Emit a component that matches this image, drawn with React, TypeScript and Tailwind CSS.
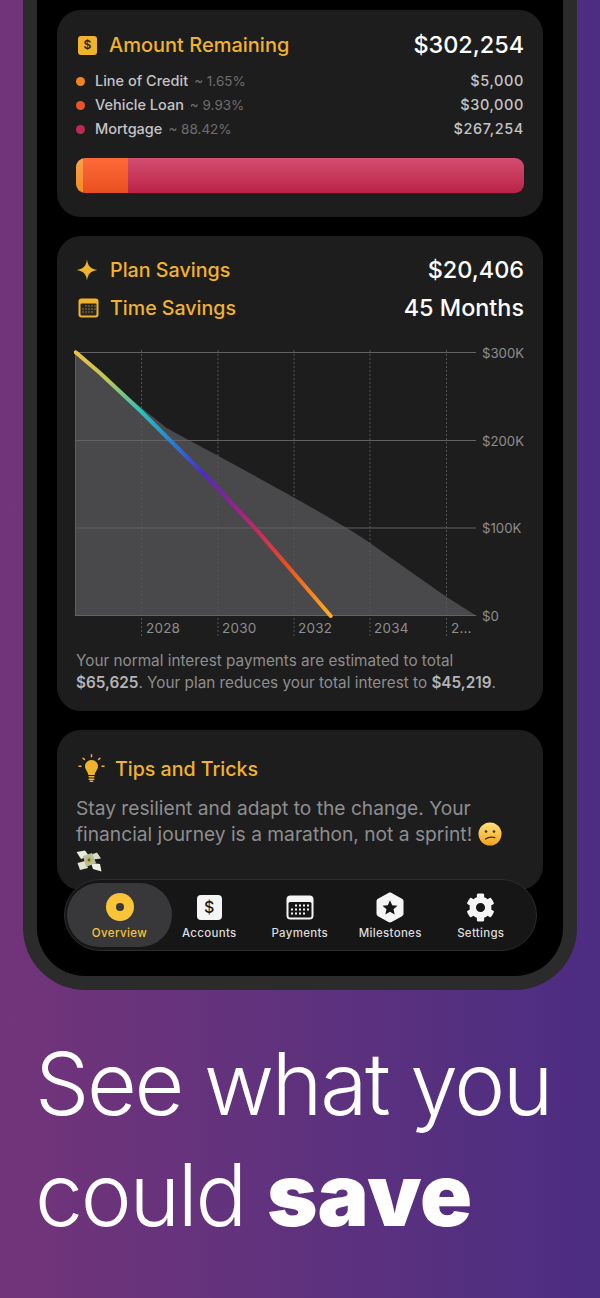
import React from 'react';
import { FaCog } from 'react-icons/fa';

const debts = [
  { name: 'Line of Credit', pct: '~ 1.65%', amount: '$5,000', dot: 'bg-[#f58220]' },
  { name: 'Vehicle Loan', pct: '~ 9.93%', amount: '$30,000', dot: 'bg-[#ea5428]' },
  { name: 'Mortgage', pct: '~ 88.42%', amount: '$267,254', dot: 'bg-[#bf2a55]' },
];

const years = [
  { x: 146, grid: 141.5, label: '2028' },
  { x: 222, grid: 218, label: '2030' },
  { x: 298, grid: 294, label: '2032' },
  { x: 374, grid: 370, label: '2034' },
  { x: 451, grid: 446.5, label: '2...' },
];

const ySteps = [
  { y: 352.5, label: '$300K' },
  { y: 440.5, label: '$200K' },
  { y: 528, label: '$100K' },
  { y: 615.5, label: '$0' },
];

const DollarTile = () => (
  <div className="flex h-[19px] w-[19px] items-center justify-center rounded-[3px] bg-[#f0b32c] text-[12px] font-semibold text-[#2a2110]">
    $
  </div>
);

const Sparkle = () => (
  <svg width="22" height="22" viewBox="0 0 22 22" className="shrink-0">
    <path d="M11 0.5C11.9 7 14.5 10 21.5 11C14.5 12 11.9 15 11 21.5C10.1 15 7.5 12 0.5 11C7.5 10 10.1 7 11 0.5Z" fill="#f0b32c" />
  </svg>
);

const CalendarOutline = () => (
  <svg width="21" height="20" viewBox="0 0 21 20" className="shrink-0">
    <rect x="0.5" y="0.5" width="20" height="19" rx="3" fill="#f0b32c" />
    <rect x="2.5" y="5.5" width="16" height="12" rx="1" fill="#2a2620" />
    {[8, 11, 14].map((y) =>
      [5, 8, 11, 14, 17].map((x) =>
        (y === 8 && x < 8) || (y === 14 && x > 14) ? null : <rect key={`${x}-${y}`} x={x - 0.7} y={y - 0.7} width="1.4" height="1.4" fill="#8d7a48" />,
      ),
    )}
  </svg>
);

const Bulb = () => (
  <svg width="27" height="29" viewBox="0 0 27 29" className="shrink-0">
    <path d="M13.5 6C9.6 6 7 8.8 7 12.2C7 15.6 9.7 17.2 10.4 21H16.6C17.3 17.2 20 15.6 20 12.2C20 8.8 17.4 6 13.5 6Z" fill="#f0b32c" />
    <rect x="10.4" y="22" width="6.2" height="1.6" rx="0.8" fill="#f0b32c" />
    <rect x="10.4" y="24.4" width="6.2" height="1.6" rx="0.8" fill="#f0b32c" />
    <rect x="11.6" y="26.6" width="3.8" height="1.4" rx="0.7" fill="#f0b32c" />
    <g stroke="#f0b32c" strokeWidth="1.5" strokeLinecap="round">
      <path d="M13.5 0.8V2.8" />
      <path d="M5 4.2L6.4 5.4" />
      <path d="M22 4.2L20.6 5.4" />
      <path d="M1 12.2H3" />
      <path d="M24 12.2H26" />
    </g>
  </svg>
);

const ConfusedFace = () => (
  <svg width="24" height="24" viewBox="0 0 24 24" className="inline align-[-5px]">
    <defs>
      <linearGradient id="faceFill" x1="0" y1="0" x2="0" y2="1">
        <stop offset="0" stopColor="#fde27a" />
        <stop offset="1" stopColor="#f2a31e" />
      </linearGradient>
    </defs>
    <circle cx="12" cy="12" r="11.5" fill="url(#faceFill)" />
    <circle cx="8" cy="9.5" r="1.3" fill="#4a2c10" />
    <circle cx="16" cy="9.5" r="1.3" fill="#4a2c10" />
    <path d="M7.5 17C10 15.2 13.5 14.8 16.8 15.6" stroke="#4a2c10" strokeWidth="1.3" fill="none" strokeLinecap="round" />
  </svg>
);

const MoneyWings = () => (
  <svg width="26" height="22" viewBox="0 0 26 22" className="inline align-[-5px]">
    <path d="M0.5 2L9 0.5L13 6L5 9Z" fill="#e9ecd8" />
    <path d="M14 5L21 2.5L25 8.5L17 9.5Z" fill="#d6dcc0" />
    <path d="M1.5 13L9 11L12 18L4 20Z" fill="#dfe3cf" />
    <path d="M15 13L24 14L25.5 21.5L17 19Z" fill="#eef0e2" />
    <path d="M7 6L16 3L20 13L10 17Z" fill="#b8bfa0" />
    <circle cx="13" cy="10" r="3" fill="#c9b35a" />
    <circle cx="13" cy="10" r="1.4" fill="#5b6a3c" />
  </svg>
);

const NavIconDollar = () => (
  <div className="flex h-[25px] w-[25px] items-center justify-center rounded-[4px] bg-[#f5f5f5] text-[16px] font-medium text-[#161616]">
    $
  </div>
);

const NavIconCalendar = () => (
  <svg width="28" height="25" viewBox="0 0 28 25">
    <rect x="0.5" y="0.5" width="27" height="24" rx="4" fill="#f5f5f5" />
    <rect x="2.5" y="7" width="23" height="15.5" rx="1.5" fill="#161616" />
    {[10.5, 14.5, 18.5].map((y) =>
      [6, 10, 14, 18, 22].map((x) =>
        (y === 10.5 && x < 10) || (y === 18.5 && x > 18) ? null : <rect key={`${x}-${y}`} x={x - 1} y={y - 1} width="2" height="2" fill="#f5f5f5" />,
      ),
    )}
  </svg>
);

const NavIconHex = () => (
  <svg width="28" height="31" viewBox="0 0 28 31">
    <path d="M12.4 1L2 6.8C1 7.4 0.5 8.2 0.5 9.4V21.6C0.5 22.8 1 23.6 2 24.2L12.4 30C13.4 30.6 14.6 30.6 15.6 30L26 24.2C27 23.6 27.5 22.8 27.5 21.6V9.4C27.5 8.2 27 7.4 26 6.8L15.6 1C14.6 0.4 13.4 0.4 12.4 1Z" fill="#f5f5f5" />
    <path d="M14 8.2L16.2 13.2L21.5 13.7L17.5 17.2L18.7 22.5L14 19.7L9.3 22.5L10.5 17.2L6.5 13.7L11.8 13.2Z" fill="#161616" />
  </svg>
);

const NavItem = ({ icon, label }: { icon: React.ReactNode; label: string }) => (
  <div className="flex w-[90.5px] flex-col items-center">
    <div className="flex h-[34px] items-center">{icon}</div>
    <span className="mt-[2px] text-[11.5px] leading-[14px] font-medium tracking-[0.3px] text-[#dcdcdc]">{label}</span>
  </div>
);

const Chart = () => (
  <svg width="450" height="300" viewBox="74 345 450 300" className="-ml-[2px] mt-[18px]">
    <defs>
      <linearGradient id="lineFill" gradientUnits="userSpaceOnUse" x1="75" y1="352" x2="331" y2="616">
        <stop offset="0" stopColor="#f2c23e" />
        <stop offset="0.12" stopColor="#b8c85a" />
        <stop offset="0.24" stopColor="#2cc2bb" />
        <stop offset="0.36" stopColor="#2a7fd0" />
        <stop offset="0.48" stopColor="#4c2cc0" />
        <stop offset="0.58" stopColor="#8c1fa0" />
        <stop offset="0.7" stopColor="#c92a5e" />
        <stop offset="0.82" stopColor="#e9501f" />
        <stop offset="1" stopColor="#fdb022" />
      </linearGradient>
    </defs>
    <path
      d="M75.7 352.3L141.7 408L166.7 428Q190 441 216.7 455Q255 476 293 497Q320 512 346.7 528Q360 536 370 543Q408 570 446.7 597L476.7 616H75.7Z"
      fill="#49494b"
    />
    {years.map((y) => (
      <line key={y.label} x1={y.grid} x2={y.grid} y1="350" y2="636" stroke="#555556" strokeWidth="1" strokeDasharray="2 2" />
    ))}
    <line x1="75.5" x2="75.5" y1="352" y2="616" stroke="#5f5f60" />
    {ySteps.map((s) => (
      <g key={s.label}>
        <line x1="75" x2="476" y1={s.y} y2={s.y} stroke="#636365" strokeWidth="1" />
        <text x="482" y={s.y + 5} fontSize="13.2" fill="#8e8e90">
          {s.label}
        </text>
      </g>
    ))}
    {years.map((y) => (
      <text key={y.label} x={y.x} y="633" fontSize="13.5" fill="#8e8e90" letterSpacing="0.2">
        {y.label}
      </text>
    ))}
    <polyline
      points="75.7,352.3 100,373 141.7,412 216.7,487 256.7,530 330.7,616"
      fill="none"
      stroke="url(#lineFill)"
      strokeWidth="4"
      strokeLinecap="round"
      strokeLinejoin="round"
    />
  </svg>
);

const App: React.FC = () => {
  return (
    <div className="h-[1298px] w-[600px] overflow-hidden bg-gradient-to-r from-[#723479] to-[#4c2d82] font-['Inter',sans-serif]">
      {/* Phone frame */}
      <div className="mx-[23px] h-[990px] rounded-b-[62px] bg-[#2b2b2c] px-[14px] pb-[14px]">
        <div className="relative flex h-full flex-col gap-[19px] rounded-b-[48px] bg-black px-[20px] pt-[10px]">
          {/* Amount remaining */}
          <div className="h-[207px] shrink-0 rounded-[24px] bg-[#1d1d1d] px-[19px] pt-[21px]">
            <div className="flex h-[28px] items-center justify-between">
              <div className="flex items-center gap-[12px] pl-[2px]">
                <DollarTile />
                <span className="text-[20px] font-medium text-[#f0b32c]">Amount Remaining</span>
              </div>
              <span className="text-[23.4px] font-medium text-white">$302,254</span>
            </div>
            <div className="mt-[10px]">
              {debts.map((d) => (
                <div key={d.name} className="flex h-[24px] items-center justify-between text-[14.5px]">
                  <div className="flex items-center">
                    <div className={`mr-[10px] h-[9px] w-[9px] rounded-full ${d.dot}`} />
                    <span className="font-medium text-[#c4c4c6]">{d.name}</span>
                    <span className="ml-[6px] text-[13.5px] text-[#6e6e70]">{d.pct}</span>
                  </div>
                  <span className="font-medium tracking-[0.6px] text-[#c4c4c6]">{d.amount}</span>
                </div>
              ))}
            </div>
            <div className="mt-[17px] flex h-[35px] overflow-hidden rounded-[9px]">
              <div className="w-[7px] bg-gradient-to-b from-[#fba04a] to-[#f48a20]" />
              <div className="w-[45px] bg-gradient-to-b from-[#ff6a38] to-[#e8501e]" />
              <div className="flex-1 bg-gradient-to-b from-[#d44d70] to-[#bb2147]" />
            </div>
          </div>

          {/* Plan savings */}
          <div className="h-[475px] shrink-0 rounded-[24px] bg-[#1d1d1d] px-[19px] pt-[15px]">
            <div className="flex h-[38px] items-center justify-between">
              <div className="flex items-center gap-[12px]">
                <Sparkle />
                <span className="pt-[2px] text-[19.7px] font-medium text-[#f0b32c]">Plan Savings</span>
              </div>
              <span className="text-[23.4px] font-medium text-white">$20,406</span>
            </div>
            <div className="flex h-[38px] items-center justify-between">
              <div className="flex items-center gap-[11px] pl-[2px]">
                <CalendarOutline />
                <span className="pt-[2px] text-[19.6px] font-medium text-[#f0b32c]">Time Savings</span>
              </div>
              <span className="text-[23.4px] font-medium text-white">45 Months</span>
            </div>
            <Chart />
            <p className="mt-[5px] text-[15.3px] leading-[22px] whitespace-nowrap text-[#8e8e90]">
              Your normal interest payments are estimated to total
              <br />
              <span className="font-semibold text-[#b4b4b6]">$65,625</span>. Your plan reduces your total interest to{' '}
              <span className="font-semibold text-[#b4b4b6]">$45,219</span>.
            </p>
          </div>

          {/* Tips */}
          <div className="h-[160px] shrink-0 rounded-[24px] bg-[#1d1d1d] px-[19px] pt-[23px]">
            <div className="flex items-center gap-[10px] pl-[2px]">
              <Bulb />
              <span className="pt-[2px] text-[19.6px] font-medium text-[#f0b32c]">Tips and Tricks</span>
            </div>
            <p className="mt-[11px] text-[19.2px] leading-[26px] whitespace-nowrap text-[#8e8e90]">
              Stay resilient and adapt to the change. Your
              <br />
              financial journey is a marathon, not a sprint! <ConfusedFace />
              <br />
              <MoneyWings />
            </p>
          </div>

          {/* Tab bar */}
          <div className="absolute top-[879px] left-[27px] flex h-[72px] w-[473px] items-center rounded-full border border-[#2c2c2e] bg-[#161616] pl-[2px]">
            <div className="z-10 -mr-[8px] flex h-[64px] w-[105px] shrink-0 flex-col items-center rounded-full bg-[#38383a] pt-[7px]">
              <div className="flex h-[34px] items-center">
                <div className="flex h-[28px] w-[28px] items-center justify-center rounded-full bg-[#f9c437]">
                  <div className="h-[8px] w-[8px] rounded-full bg-[#38383a]" />
                </div>
              </div>
              <span className="mt-[2px] text-[11.5px] leading-[14px] font-medium tracking-[0.4px] text-[#f9c437]">Overview</span>
            </div>
            <NavItem icon={<NavIconDollar />} label="Accounts" />
            <NavItem icon={<NavIconCalendar />} label="Payments" />
            <NavItem icon={<NavIconHex />} label="Milestones" />
            <NavItem icon={<FaCog className="h-[29px] w-[29px] text-[#f5f5f5]" />} label="Settings" />
          </div>
        </div>
      </div>

      {/* Headline */}
      <h1 className="mt-[39px] pl-[35px] text-[86px] leading-[111px] font-light tracking-[-2.3px] whitespace-nowrap text-white">
        See what you
        <br />
        could <span className="font-black tracking-[0px]">save</span>
      </h1>
    </div>
  );
};

export default App;
